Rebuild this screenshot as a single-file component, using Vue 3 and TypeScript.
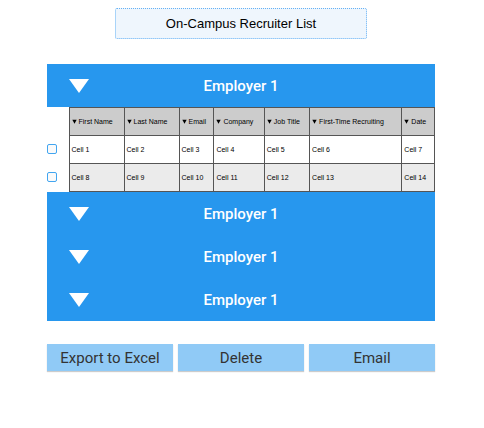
<script setup lang="ts">
import { reactive, ref } from 'vue'

interface Employer {
  id: number
  name: string
  open: boolean
  rows: string[][]
}

const columns = ['First Name', 'Last Name', 'Email', 'Company', 'Job Title', 'First-Time Recruiting', 'Date']
const actions = ['Export to Excel', 'Delete', 'Email']
const selected = ref<string[]>([])

const employers = reactive<Employer[]>([
  {
    id: 1,
    name: 'Employer 1',
    open: true,
    rows: [
      ['Cell 1', 'Cell 2', 'Cell 3', 'Cell 4', 'Cell 5', 'Cell 6', 'Cell 7'],
      ['Cell 8', 'Cell 9', 'Cell 10', 'Cell 11', 'Cell 12', 'Cell 13', 'Cell 14'],
    ],
  },
  { id: 2, name: 'Employer 1', open: false, rows: [] },
  { id: 3, name: 'Employer 1', open: false, rows: [] },
  { id: 4, name: 'Employer 1', open: false, rows: [] },
])
</script>

<template>
  <main class="page">
    <h1 class="title">On-Campus Recruiter List</h1>

    <section class="list">
      <div v-for="employer in employers" :key="employer.id">
        <button class="bar" type="button" :aria-expanded="employer.open" @click="employer.open = !employer.open">
          <svg class="arrow" viewBox="0 0 20 14" aria-hidden="true"><path d="M0 0H20L10 14Z" /></svg>
          <span>{{ employer.name }}</span>
          <span></span>
        </button>
        <table v-if="employer.open && employer.rows.length" class="grid">
          <colgroup>
            <col class="pick-col" />
            <col class="first" />
            <col class="last" />
            <col class="mail" />
            <col class="company" />
            <col class="job" />
            <col class="recruiting" />
            <col />
          </colgroup>
          <thead>
            <tr>
              <td class="pick"></td>
              <th v-for="column in columns" :key="column" scope="col">
                <span class="head">
                  <svg class="sort" viewBox="0 0 5 5" aria-hidden="true"><path d="M0.3 0.7H4.7L2.5 4.7Z" /></svg>
                  {{ column }}
                </span>
              </th>
            </tr>
          </thead>
          <tbody>
            <tr v-for="row in employer.rows" :key="row[0]">
              <td class="pick">
                <input v-model="selected" class="check" type="checkbox" :value="row[0]" :aria-labelledby="row[0].replace(' ', '-')" />
              </td>
              <td v-for="cell in row" :id="cell.replace(' ', '-')" :key="cell" class="cell">{{ cell }}</td>
            </tr>
          </tbody>
        </table>
      </div>
    </section>

    <div class="actions">
      <button v-for="action in actions" :key="action" class="action" type="button">{{ action }}</button>
    </div>
  </main>
</template>

<style>
body {
  background: #fff;
}
</style>

<style scoped>
.page {
  padding: 8px 49px 24px 47px;
  font-family: "Liberation Sans", Arial, sans-serif;
  color: #000;
}

.title {
  box-sizing: border-box;
  width: 65%;
  margin: 0 auto 25px;
  padding: 7px;
  border: 1px dotted #64b1f5;
  border-radius: 2px;
  background: #eff6fd;
  font-size: 13px;
  font-weight: 400;
  line-height: 15px;
  text-align: center;
}

.bar {
  display: grid;
  grid-template-columns: 1fr auto 1fr;
  align-items: center;
  width: 100%;
  height: 43px;
  margin: 0;
  padding: 0 22px;
  border: 0;
  background: #2797ee;
  color: #fff;
  font-family: Roboto, sans-serif;
  font-size: 15px;
  font-weight: 500;
  cursor: pointer;
}

.arrow {
  width: 20px;
  height: 14px;
  fill: #fff;
}

.grid {
  width: 100%;
  table-layout: fixed;
  border-collapse: collapse;
  font-size: 7px;
  line-height: 9px;
}

.pick-col {
  width: 22px;
}

.first {
  width: 14.2%;
}

.last {
  width: 14.2%;
}

.mail {
  width: 9%;
}

.company {
  width: 13%;
}

.job {
  width: 11.7%;
}

.recruiting {
  width: 23.8%;
}

th,
.cell {
  height: 27px;
  padding: 0 0 0 2px;
  border: 1px solid #555;
  font-weight: 400;
  text-align: left;
  white-space: nowrap;
}

th {
  background: #ccc;
}

tbody tr:nth-child(even) .cell {
  background: #ebebeb;
}

.head {
  display: flex;
  align-items: center;
  gap: 2px;
}

.sort {
  width: 5px;
  height: 5px;
}

.pick {
  padding: 0 0 2px;
}

.check {
  appearance: none;
  display: block;
  box-sizing: border-box;
  width: 10px;
  height: 10px;
  margin: 0;
  border: 1px solid #42a5f0;
  border-radius: 2px;
  background: #fafafa;
}

.check:checked {
  background: #2797ee;
}

.actions {
  display: grid;
  grid-template-columns: repeat(3, 1fr);
  gap: 5px;
  margin-top: 23px;
}

.action {
  height: 27px;
  padding: 0;
  border: 0;
  background: #90caf6;
  box-shadow: 0 1px 1px #ccc;
  color: #333;
  font-family: Roboto, sans-serif;
  font-size: 15px;
  cursor: pointer;
}
</style>
